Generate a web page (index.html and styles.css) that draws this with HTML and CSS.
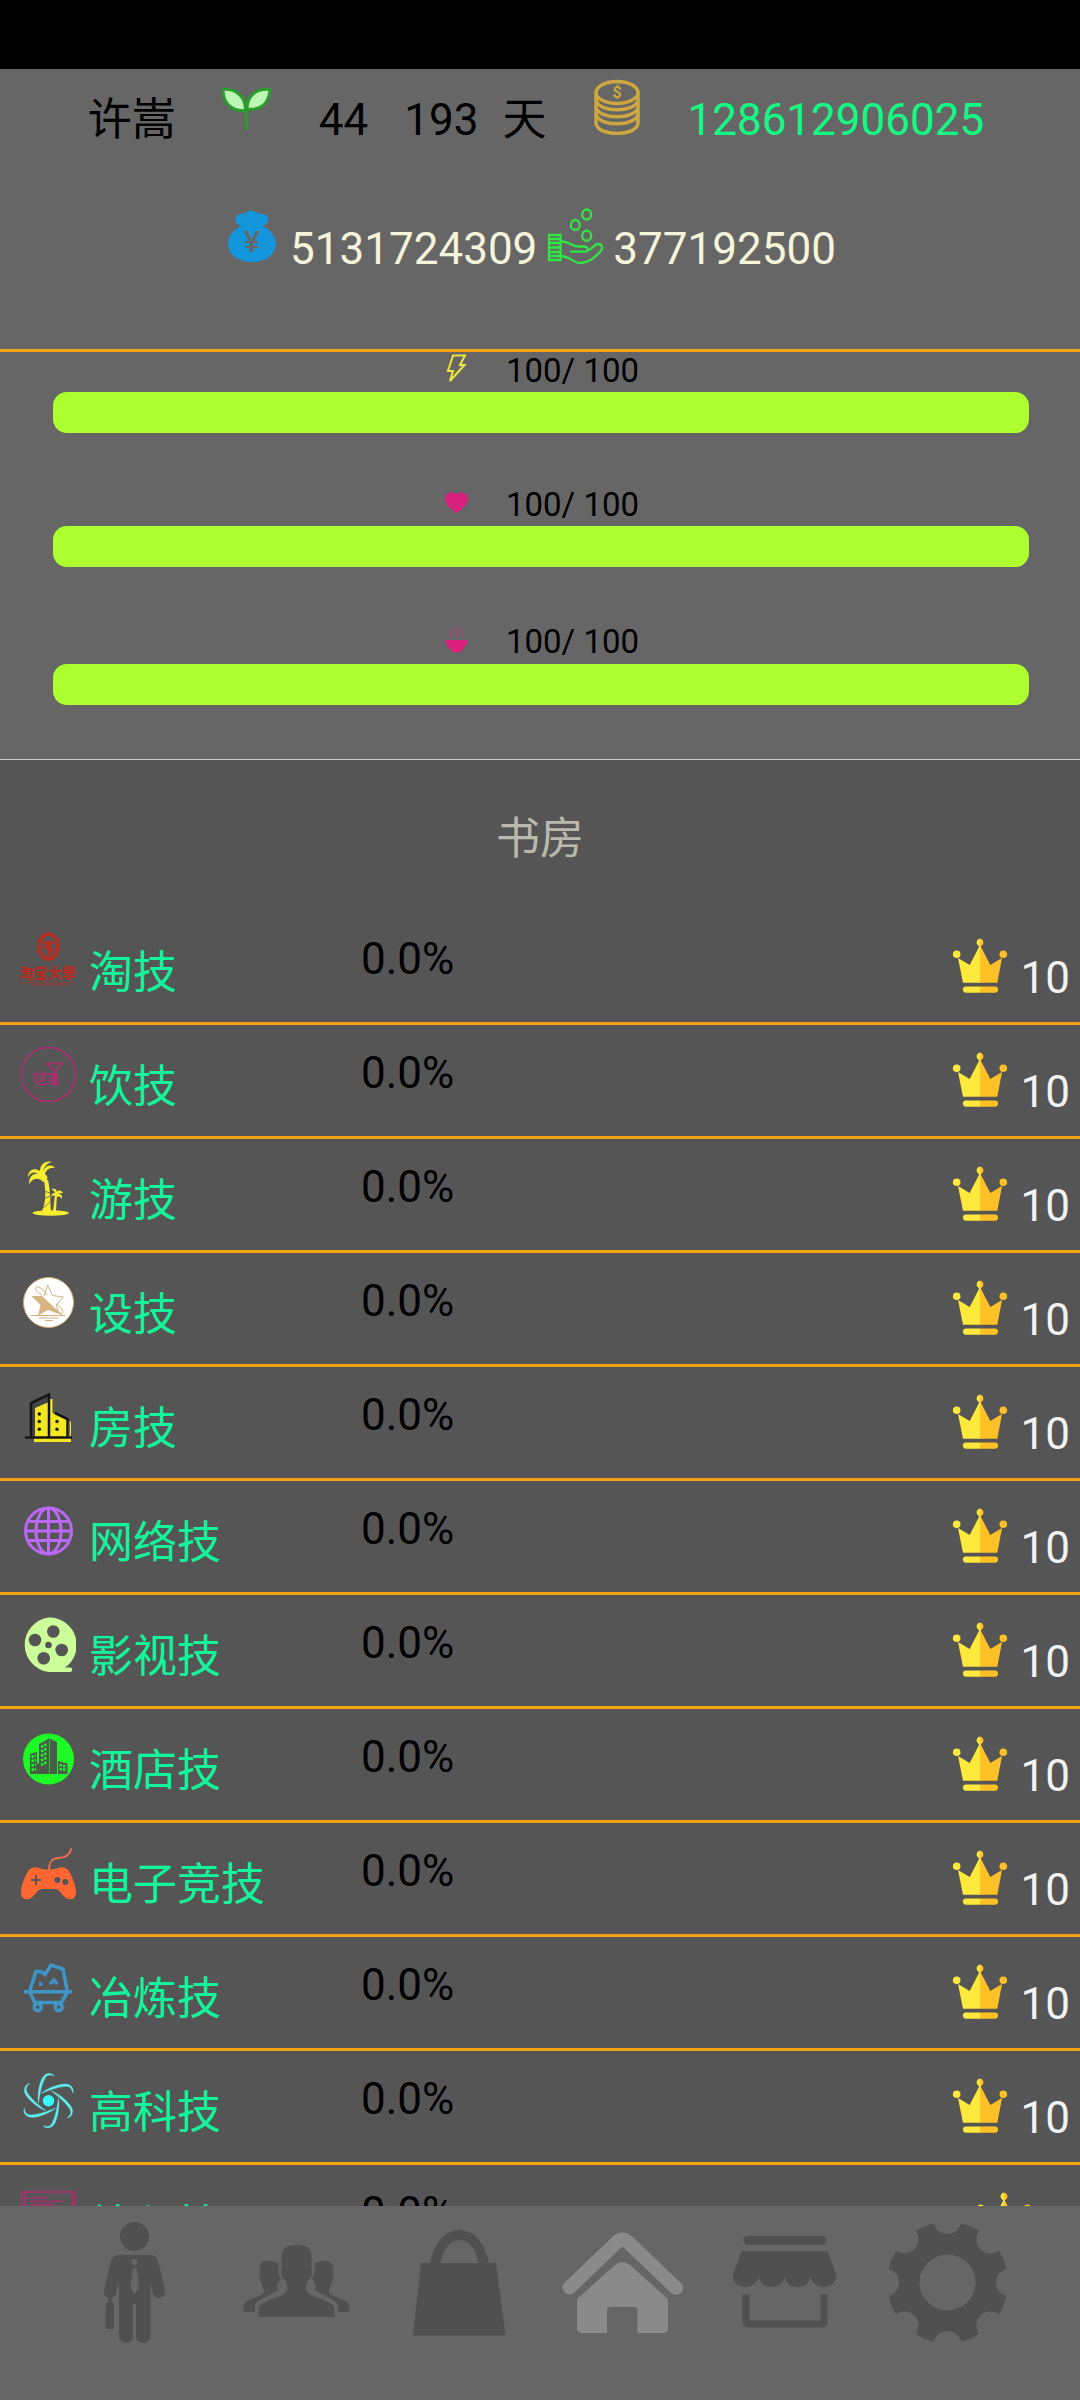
FILE: index.html
```html
<!DOCTYPE html>
<html lang="zh-CN">
<head>
<meta charset="utf-8">
<meta name="viewport" content="width=device-width, initial-scale=1">
<title>书房</title>
<link rel="stylesheet" href="styles.css">
</head>
<body>
<svg class="sprite" aria-hidden="true">
  <symbol id="crown" viewBox="0 0 56 56">
    <g fill="#ffe93c"><path d="M6 21L17.700 28L28 8V45.700H11z"/><circle cx="4.700" cy="17.300" r="3.800"/><path d="M28 1.500a3.700 3.900 0 0 0-1.500 7.300L28 12zM14 49.500H28v6.200H14a3.100 3.100 0 0 1 0-6.200z"/></g>
    <g fill="#ffc125"><path d="M50 21L38.300 28L28 8V45.700H45.300z"/><circle cx="51.300" cy="17.300" r="3.800"/><path d="M28 1.500a3.700 3.900 0 0 1 1.500 7.300L28 12zM43 49.500H28v6.200H43a3.100 3.100 0 0 0 0-6.200z"/></g>
  </symbol>
</svg>

<div class="status-bar"></div>

<header class="summary">
  <div class="summary-row">
    <span class="player">许嵩</span>
    <svg class="icon sprout" viewBox="0 0 56 56"><path d="M28.500 29V51" stroke="#2a9d2c" stroke-width="3"/><g fill="#bdf7b5" stroke="#2a9d2c" stroke-width="3"><path d="M5 10.500C18 9 28 18 27.500 32C14 32 5 25 5 10.500z"/><path d="M52 10.500C38 9 29 17 29 30C42 32 51 25 52 10.500z"/></g></svg>
    <span class="age">44</span>
    <span class="days">193</span>
    <span class="unit">天</span>
    <svg class="icon coins" viewBox="0 0 56 56"><g fill="none" stroke="#cda73f" stroke-width="3.500"><ellipse cx="28" cy="13.500" rx="21" ry="11"/><path d="M7 13.500V44C8 58 48 58 49 44V13.500"/><path d="M7 21C9 34 47 34 49 21M7 28C9 41 47 41 49 28M7 35C9 48 47 48 49 35"/></g><text class="coin-sign" x="28" y="18.500">$</text></svg>
    <span class="total">128612906025</span>
  </div>
  <div class="summary-row funds">
    <svg class="icon" viewBox="0 0 56 56"><path fill="#1496dc" d="M17 18C12 16 11 12 12 9C14 5 19 6 21 5C25 2 30 2 33 5C36 6 42 5 44 9C45 13 43 16 39 18C47 22 52 29 52 36C51 48 41 54 28 54S5 48 4 36C4 29 9 22 17 18z"/><text class="yen-sign" x="28" y="44">¥</text></svg>
    <span>5131724309</span>
    <svg class="icon" viewBox="0 0 56 56"><g fill="none" stroke="#2fe642" stroke-width="2.300"><ellipse cx="39.700" cy="6.500" rx="4.500" ry="5"/><ellipse cx="28.300" cy="17" rx="4.500" ry="5"/><ellipse cx="39.700" cy="27.700" rx="4.500" ry="5"/><path d="M2 27H13.500V52H2zM2 31H13.500M2 35H13.500M2 39.500H13.500M2 44H13.500M2 48H13.500"/><path d="M14 33.500C23 33 24 39 32 38.500H37C42 39 42 44 37 43.700H23M40 43C46 41 47 36 51 36C56 36 56 41 53 44C48 49 42 55 33 55C27 55 22 48 14 48"/></g></svg>
    <span>377192500</span>
  </div>
</header>

<section class="gauges">
  <div class="gauge">
    <label class="gauge-label" for="energy"><svg class="gauge-icon" viewBox="0 0 28 28"><path d="M10 1.500H22L17 11H21.500L7 27L10 17H5z" fill="none" stroke="#efe63c" stroke-width="2"/></svg><span>100/ 100</span></label>
    <progress id="energy" class="bar" value="100" max="100"></progress>
  </div>
  <div class="gauge">
    <label class="gauge-label" for="health"><svg class="gauge-icon" viewBox="0 0 28 28"><path d="M13.500 25C6 20 2 15 2 11C2 4 10 3 13.500 6C17 3 25 4 25 11C25 15 21 20 13.500 25z" fill="#d9207c"/></svg><span>100/ 100</span></label>
    <progress id="health" class="bar" value="100" max="100"></progress>
  </div>
  <div class="gauge gauge-last">
    <label class="gauge-label" for="food"><svg class="gauge-icon" viewBox="0 0 28 28"><path d="M7.500 4v8M13.500 3v9M19.500 4v8" stroke="#9a4873" stroke-width="2"/><path d="M2 15H25C24 21 20 23 18 27H9C7 23 3 21 2 15z" fill="#d9207c"/></svg><span>100/ 100</span></label>
    <progress id="food" class="bar" value="100" max="100"></progress>
  </div>
</section>

<main class="study">
  <h1 class="title">书房</h1>
  <ul class="skills">
    <li class="skill"><div class="name"><svg class="icon" viewBox="0 0 56 56"><g fill="none" stroke="#b52c20"><ellipse cx="28.500" cy="14.500" rx="9.500" ry="12.500" stroke-width="3.500"/><path d="M24 9L33 19M33 10L24 16M29 9V24" stroke-width="3"/><path d="M2 50.500H54M12 53H46" stroke-width="1.500" stroke-dasharray="3 1" opacity=".6"/></g><text class="emblem-text" x="28" y="46">淘宝大學</text></svg><span>淘技</span></div><span class="progress-text">0.0%</span><div class="level"><svg class="icon"><use href="#crown"/></svg><span>10</span></div></li>
    <li class="skill"><div class="name"><svg class="icon" viewBox="0 0 56 56"><g fill="none" stroke="#b02c72" stroke-width="1.600"><circle cx="28.500" cy="28.500" r="27"/><path d="M27 17.500H42.500L35 26zM35 26V38M31 38.500H39M14 28H31C31 35 28 39 22.500 39S14 35 14 28zM20 28V35H24V28M33 28h4v9h-4z"/></g></svg><span>饮技</span></div><span class="progress-text">0.0%</span><div class="level"><svg class="icon"><use href="#crown"/></svg><span>10</span></div></li>
    <li class="skill"><div class="name"><svg class="icon" viewBox="0 0 56 56"><g fill="#f7ec2f"><path d="M24 20L28 20C31 33 30 43 31 51H22C26 42 26 33 24 20z"/><path d="M23 22C19 17 13 18 9 24C9 17 13 13 18 14C14 11 10 13 8 17C8 10 14 7 20 11C20 4 26 0 32 2C27 3 24 7 23 11C26 5 32 4 35 8C29 7 26 11 25 14C29 17 28 21 23 22z"/><path d="M35 35L37 35L36 51H33z"/><path d="M36 37C33 35 32 35 31 38C31 34 33 33 35 33C34 30 32 30 32 29C35 28 37 30 37 32C39 29 42 31 43 33C40 33 39 33 39 34C42 34 43 37 41 39C41 36 39 36 36 37z"/><ellipse cx="30.700" cy="53" rx="18" ry="2.700"/></g><path d="M24 31L30 33M24 39L30 36M23 48L30 42" stroke="#555" stroke-width=".7"/></svg><span>游技</span></div><span class="progress-text">0.0%</span><div class="level"><svg class="icon"><use href="#crown"/></svg><span>10</span></div></li>
    <li class="skill"><div class="name"><svg class="icon" viewBox="0 0 56 56"><circle cx="28.500" cy="28.500" r="25" fill="#fff" stroke="#d4b27c"/><path d="M11.500 22H22L43 41.500L28 36L18 41.500L20.500 31z" fill="#d6b483"/><g fill="none" stroke="#d4b27c"><path d="M24 22L27.700 11L32.500 21.500L43.500 23L36 31L39 39M22 21C14 17 14 12 19 13C22 14 25 18 27 21M37 30C45 36 43 41 40 39M11 41.500H45M19 44H38M25 46.500H33"/></g></svg><span>设技</span></div><span class="progress-text">0.0%</span><div class="level"><svg class="icon"><use href="#crown"/></svg><span>10</span></div></li>
    <li class="skill"><div class="name"><svg class="icon" viewBox="0 0 56 56"><path d="M13 19L29 11H32.500V25L47 31V33.500H51V54H14V49H13z" fill="#f5e622"/><path d="M11 15L29 6.500V14L15 20V49H11z" fill="#444"/><path d="M11 49V15L29 6.500V49M35 25L47.500 31V49M5 49.500H52" fill="none" stroke="#151515" stroke-width="2.500"/><path d="M49.300 33v16" stroke="#555"/><g fill="#151515"><circle cx="19.300" cy="26" r="1.700"/><circle cx="19.300" cy="33.500" r="1.700"/><circle cx="19.300" cy="41.300" r="1.700"/><circle cx="37" cy="33.500" r="1.700"/><circle cx="37" cy="41.300" r="1.700"/></g></svg><span>房技</span></div><span class="progress-text">0.0%</span><div class="level"><svg class="icon"><use href="#crown"/></svg><span>10</span></div></li>
    <li class="skill"><div class="name"><svg class="icon" viewBox="0 0 56 56"><g fill="none" stroke="#bb68f5" stroke-width="3"><circle cx="28.500" cy="29" r="23"/><ellipse cx="28.500" cy="29" rx="12.500" ry="23"/><path d="M28.500 6V52M5.500 29H51.500M9 19.500H48M9 38.500H48"/></g></svg><span>网络技</span></div><span class="progress-text">0.0%</span><div class="level"><svg class="icon"><use href="#crown"/></svg><span>10</span></div></li>
    <li class="skill"><div class="name"><svg class="icon" viewBox="0 0 56 56"><path fill="#ccff99" d="M28.500 1.500A27.500 27.500 0 0 1 45 51.500H50C53 51.500 53 56 50 56H28.500A27.500 27.500 0 0 1 28.500 1.500z"/><g fill="#555"><circle cx="15" cy="24" r="6.300"/><circle cx="33.300" cy="15.500" r="6.300"/><circle cx="41.700" cy="34" r="6.300"/><circle cx="23.700" cy="42.300" r="6.300"/><circle cx="28.500" cy="29" r="3.300"/></g></svg><span>影视技</span></div><span class="progress-text">0.0%</span><div class="level"><svg class="icon"><use href="#crown"/></svg><span>10</span></div></li>
    <li class="skill"><div class="name"><svg class="icon" viewBox="0 0 56 56"><circle cx="28.500" cy="29" r="25.500" fill="#1dfa25"/><path d="M10 44V24L17 22V34L19 33V14L29 8.500L37 12V44H38V31L47.500 33.500V44z" fill="#4c5a4c"/><path d="M21 17L27 14M21 21.500L27 18.500M21 26L27 23M21 30.500L27 27.500M21 35L27 32M11.500 27L16 25.500M11.500 31L16 30M11.500 35.500L16 34.500M11.500 40L16 39M39.500 35L46 36.500M39.500 39L46 40" stroke="#1dfa25" stroke-width="2.500" stroke-dasharray="2.500 1"/><path d="M29.500 10V43" stroke="#1dfa25" stroke-width=".7"/></svg><span>酒店技</span></div><span class="progress-text">0.0%</span><div class="level"><svg class="icon"><use href="#crown"/></svg><span>10</span></div></li>
    <li class="skill"><div class="name"><svg class="icon" viewBox="0 0 56 56"><path d="M29 26C29 19 32 14 38 14C45 14 50 11 51.500 4" fill="none" stroke="#e8704e" stroke-width="2"/><path d="M7 29C9 24 14 22 19 24C25 26 32 26 38 24C43 22 48 24 50 29C53 35 56 42 56 48C56 55 51 57 46 54C41 51 40 45 35 45H22C17 45 16 51 11 54C6 57 1 55 1 48C1 42 4 35 7 29z" fill="#ff6631"/><path d="M16 31V41M11 36H21" stroke="#555" stroke-width="2"/><circle cx="37.300" cy="36" r="3" fill="#555"/><circle cx="45.300" cy="38" r="3" fill="#555"/></svg><span>电子竞技</span></div><span class="progress-text">0.0%</span><div class="level"><svg class="icon"><use href="#crown"/></svg><span>10</span></div></li>
    <li class="skill"><div class="name"><svg class="icon" viewBox="0 0 56 56"><g fill="none" stroke="#3e96c8" stroke-width="3.500"><path d="M10 32L16 13.500H21L25 16.500L31 7L43 11L47 32M4 33.700H52M10 35L15 44.500H41.500L47 35M30 26L33.700 22L37.500 26"/><circle cx="17.700" cy="49" r="3.500"/><circle cx="38.700" cy="49" r="3.500"/></g><circle cx="20.700" cy="26" r="2" fill="#3e96c8"/></svg><span>冶炼技</span></div><span class="progress-text">0.0%</span><div class="level"><svg class="icon"><use href="#crown"/></svg><span>10</span></div></li>
    <li class="skill"><div class="name"><svg class="icon" viewBox="0 0 56 56"><defs><path id="arm" d="M18.500 31C17 22 20 6 25 3C28 1 32 1 34 4C30 2 27 3 25 6C21 14 20 22 18.500 31z"/></defs><circle cx="28.500" cy="28.700" r="5.700" fill="#33ffff"/><g fill="#5df0f0" stroke="#5df0f0" stroke-width=".4"><use href="#arm"/><use href="#arm" transform="rotate(60 28.500 28.700)"/><use href="#arm" transform="rotate(120 28.500 28.700)"/><use href="#arm" transform="rotate(180 28.500 28.700)"/><use href="#arm" transform="rotate(240 28.500 28.700)"/><use href="#arm" transform="rotate(300 28.500 28.700)"/></g></svg><span>高科技</span></div><span class="progress-text">0.0%</span><div class="level"><svg class="icon"><use href="#crown"/></svg><span>10</span></div></li>
    <li class="skill"><div class="name"><svg class="icon" viewBox="0 0 56 56"><path d="M2 6H55V52H2zM5 6V52M53 8V50M10 12H28M10 15.500H43M10 19H34M10 22.500H30" fill="none" stroke="#b02c72" stroke-width="1.500"/></svg><span>编程技</span></div><span class="progress-text">0.0%</span><div class="level"><svg class="icon"><use href="#crown"/></svg><span>1</span></div></li>
  </ul>
</main>

<nav class="tabs">
  <button class="tab" type="button" aria-label="个人"><svg class="tab-icon" viewBox="0 0 121 121"><circle cx="60.500" cy="14.500" r="14.500"/><path d="M44 33H77Q82 33 84 39L91 68C93 76 82 79 79 72L76.500 59V114C76.500 123 62 123 62 114V82H59V114C59 123 45 123 45 114V59L42 72C39 79 28 76 30 68L37 39Q39 33 44 33z"/><path d="M34.500 75H37.500V79Q40 81 40 84V104Q40 107 38 107H33.500Q31.500 107 31.500 104V84Q31.500 81 34.500 79z"/><g class="cutout"><circle cx="60.500" cy="40" r="3"/><path d="M59 46H62.500L65 66L60.500 72L56.500 66z"/></g></svg></button>
  <button class="tab" type="button" aria-label="团队"><svg class="tab-icon" viewBox="0 0 121 121"><g id="member"><path d="M42.500 42C36 37 25 38 24 44C23 49 24 53 23.500 56L26 62L28 69C28 73 22 74 18 76C11 79 7.500 80 7.500 85V90H19V83C22 76 36 73 42 68L41 64L45 56C42 53 42 50 42.500 42z"/></g><use href="#member" transform="translate(121 0) scale(-1 1)"/><path d="M60.500 23C50 23 46 27 45.500 33V47C44 53 47 57 49 58C51 64 52 64 51 68C48 74 40 75 34 78C27 81 22.500 82 22.500 88V95H98.500V88C98.500 82 94 81 87 78C81 75 73 74 70 68C69 64 70 64 72 58C74 57 77 53 75.500 47V33C75 27 71 23 60.500 23z"/></svg></button>
  <button class="tab" type="button" aria-label="背包"><svg class="tab-icon" viewBox="0 0 121 121"><path d="M22 41H97L106.500 113.500H14z"/><path d="M36 42C40 23 49 13 60.500 13S81 23 85 42" fill="none" stroke="currentColor" stroke-width="10"/></svg></button>
  <button class="tab tab-active" type="button" aria-label="主页" aria-current="page"><svg class="tab-icon" viewBox="0 0 121 121"><path d="M7.500 65.500L55 20Q60.500 15 66 20L114 66" fill="none" stroke="currentColor" stroke-width="14" stroke-linecap="round"/><path d="M53 43Q60.500 37 68 43L106 77V106Q106 111 101 111H75.500V88Q75.500 85 72.500 85H48Q45 85 45 88V111H20Q15 111 15 106V77z"/></svg></button>
  <button class="tab" type="button" aria-label="商店"><svg class="tab-icon" viewBox="0 0 121 121"><rect x="19.500" y="14" width="83" height="9" rx="4.500"/><path d="M17.500 29H103.500L112 52C114 68 89 70 86.500 54C85 69 62 69 60.500 54C59 69 36 69 34.500 54C32 70 7 68 9 52z"/><path d="M22 72.500V99Q22 102 25 102H97Q100 102 100 99V72.500" fill="none" stroke="currentColor" stroke-width="7"/></svg></button>
  <button class="tab" type="button" aria-label="设置"><svg class="tab-icon" viewBox="0 0 121 121"><mask id="teeth"><rect width="121" height="121" fill="#fff"/><g fill="#000"><circle cx="60.500" cy="60.500" r="28"/><circle cx="60.500" cy="-2" r="14"/><circle cx="60.500" cy="123" r="14"/><circle cx="-2" cy="60.500" r="14"/><circle cx="123" cy="60.500" r="14"/><circle cx="17.500" cy="17.500" r="14"/><circle cx="103.500" cy="17.500" r="14"/><circle cx="17.500" cy="103.500" r="14"/><circle cx="103.500" cy="103.500" r="14"/></g></mask><circle cx="60.500" cy="60.500" r="60.500" mask="url(#teeth)"/></svg></button>
</nav>
</body>
</html>
```

FILE: styles.css
```css
* {
  box-sizing: border-box;
}

body {
  margin: 0;
  height: 100vh;
  display: flex;
  flex-direction: column;
  overflow: hidden;
  background: #555;
  color: #000;
  font-family: Roboto, "Noto Sans CJK SC", sans-serif;
  font-size: 44px;
  line-height: 56px;
}

.sprite {
  position: absolute;
  width: 0;
  height: 0;
}

.status-bar {
  flex: none;
  height: 69px;
  background: #000;
}

.icon {
  flex: none;
  width: 56px;
  height: 56px;
}

/* Player summary */
.summary {
  flex: none;
  display: flex;
  flex-direction: column;
  gap: 60px;
  padding: 10px 0 72px;
  background: #666;
  border-bottom: 3px solid #f3a416;
}

.summary-row {
  display: flex;
  justify-content: center;
  align-items: baseline;
  padding-right: 8px;
}

.sprout {
  margin: 0 45px 0 42px;
}

.days {
  margin: 0 24px 0 36px;
}

.coins {
  margin: 0 42px 0 43px;
}

.total {
  color: #12fa83;
}

.coin-sign {
  fill: #cda73f;
  font-size: 16px;
  font-weight: 700;
  text-anchor: middle;
}

.yen-sign {
  fill: #666;
  font-size: 30px;
  font-weight: 500;
  text-anchor: middle;
}

.funds {
  gap: 10px;
  padding-right: 20px;
  color: #f5f5dc;
}

/* Gauges */
.gauges {
  flex: none;
  padding-bottom: 54px;
  background: #666;
  border-bottom: 1px solid #ccc;
}

.gauge + .gauge {
  margin-top: 53px;
}

.gauges .gauge-last {
  margin-top: 56px;
}

.gauge-label {
  display: flex;
  justify-content: center;
  align-items: baseline;
  gap: 35px;
  height: 40px;
  padding-left: 2px;
  font-size: 33px;
  line-height: 38px;
}

.gauge-last .gauge-label {
  height: 41px;
}

.gauge-icon {
  width: 28px;
  height: 28px;
}

.bar {
  display: block;
  width: auto;
  min-width: calc(100% - 104px);
  height: 41px;
  margin: 0 51px 0 53px;
  border: 0;
  border-radius: 14px;
  overflow: hidden;
  appearance: none;
  background: #555;
}

.bar::-webkit-progress-bar {
  background: #555;
}

.bar::-webkit-progress-value {
  background: #adff2f;
}

/* Skill list */
.study {
  flex: 1;
  min-height: 0;
  overflow: hidden;
}

.title {
  margin: 0;
  padding: 51px 0 44px;
  color: #b9b9ae;
  font-size: 44px;
  font-weight: 400;
  text-align: center;
}

.skills {
  margin: 0;
  padding: 0;
  list-style: none;
}

.skill {
  display: grid;
  grid-template-columns: repeat(3, 1fr);
  height: 114px;
  border-bottom: 3px solid #f3a416;
}

.name {
  display: flex;
  align-items: baseline;
  gap: 13px;
  padding: 21px 0 0 20px;
  color: #12f59b;
  white-space: nowrap;
}

.emblem-text {
  fill: #b52c20;
  font-size: 14px;
  font-weight: 900;
  text-anchor: middle;
}

.progress-text {
  padding: 20px 0 0 1px;
}

.level {
  display: flex;
  justify-content: flex-end;
  align-items: baseline;
  gap: 13px;
  padding: 26px 10px 0 0;
  color: #f2f2f2;
}

/* Bottom tabs */
.tabs {
  flex: none;
  display: grid;
  grid-template-columns: repeat(6, 1fr);
  padding: 16px 51px 57px 53px;
  background: #666;
}

.tab {
  display: flex;
  justify-content: center;
  padding: 0;
  border: 0;
  background: none;
  color: #505050;
}

.tab-active {
  color: #8a8a8a;
}

.tab-icon {
  width: 121px;
  height: 121px;
  fill: currentColor;
}

.cutout {
  fill: #666;
}
```
